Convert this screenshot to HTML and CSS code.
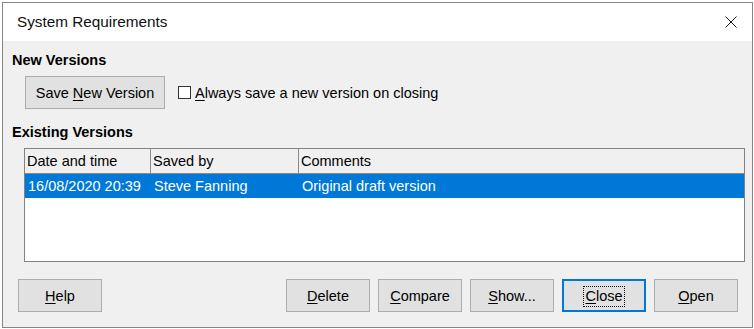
FILE: index.html
```html
<!doctype html>
<html>
	<head>
		<meta http-equiv="Content-Type" content="text/html; charset=utf-8">
		<title>Versions</title>
		<link rel="stylesheet" href="styles.css">
	</head>
<body>
	<div class="window">
		<div class="titlebar">
			<span class="title">System Requirements</span>
			<svg class="closex" width="12" height="12" viewBox="0 0 12 12">
				<path d="M0.5 0.5 L11.5 11.5 M11.5 0.5 L0.5 11.5" stroke="#1a1a1a" stroke-width="1" fill="none"/>
			</svg>
		</div>
		<div class="content">
			<div class="heading">New Versions</div>
			<div class="newrow">
				<button class="btn save">Save <u>N</u>ew Version</button>
				<label class="check"><span class="box"></span><span><u>A</u>lways save a new version on closing</span></label>
			</div>

			<div class="heading existing">Existing Versions</div>
			<div class="list">
				<div class="thead">
					<div class="cell c1">Date and time</div>
					<div class="cell c2">Saved by</div>
					<div class="cell c3">Comments</div>
				</div>
				<div class="row sel">
					<div class="cell c1">16/08/2020 20:39</div>
					<div class="cell c2">Steve Fanning</div>
					<div class="cell c3">Original draft version</div>
				</div>
			</div>

			<div class="actions">
				<button class="btn"><u>H</u>elp</button>
				<div class="spacer"></div>
				<button class="btn"><u>D</u>elete</button>
				<button class="btn"><u>C</u>ompare</button>
				<button class="btn"><u>S</u>how...</button>
				<button class="btn focus"><span class="ring"><u>C</u>lose</span></button>
				<button class="btn"><u>O</u>pen</button>
			</div>
		</div>
	</div>
</body>
</html>
```

FILE: styles.css
```css
*{margin:0;padding:0;box-sizing:border-box;}
body{background:#fff;font-family:"Liberation Sans",Arial,sans-serif;font-size:14.5px;color:#000;}
u{text-underline-offset:2px;}

.window{margin:2px 0 0 2px;width:751px;height:326px;border:1px solid #858585;background:#f0f0f0;display:flex;flex-direction:column;}
.titlebar{height:38px;background:#fff;display:flex;align-items:center;padding:0 15px 0 14px;}
.titlebar .title{flex:1;font-size:15.3px;color:#111;}
.closex{display:block;}

.content{padding:0 14px 0 9px;}
.heading{font-weight:bold;line-height:20px;margin-top:9px;}
.heading.existing{margin-top:13px;}

.newrow{display:flex;align-items:center;margin-top:6px;padding-left:13px;}
.btn{height:33px;width:84px;background:#e1e1e1;border:1px solid #adadad;font:inherit;color:#000;text-align:center;line-height:30px;white-space:nowrap;}
.btn.save{width:140px;}
.check{display:flex;align-items:center;margin-left:13px;}
.check .box{width:13px;height:13px;border:1px solid #333;background:#fff;margin-right:4px;}

.list{margin:6px -7px 0 12px;height:114px;border:1px solid #828282;background:#fff;}
.thead{display:flex;height:25px;background:#f0f0f0;border-bottom:1px solid #8a8a8a;}
.thead .cell{border-right:1px solid #8a8a8a;}
.thead .c3{border-right:none;}
.cell{padding:0 2px;line-height:25px;white-space:nowrap;}
.c1{width:126px;}
.c2{width:148px;}
.c3{flex:1;}
.row{display:flex;height:24px;}
.row .cell{padding-left:3px;line-height:24px;}
.row.sel{background:#0078d7;color:#fff;}

.actions{display:flex;gap:8px;margin-top:17px;padding-left:6px;}
.spacer{flex:1;}
.btn.focus{border:2px solid #0078d7;line-height:28px;}
.ring{outline:1px dotted #000;outline-offset:0;padding:1px 1px 2px;}
```
